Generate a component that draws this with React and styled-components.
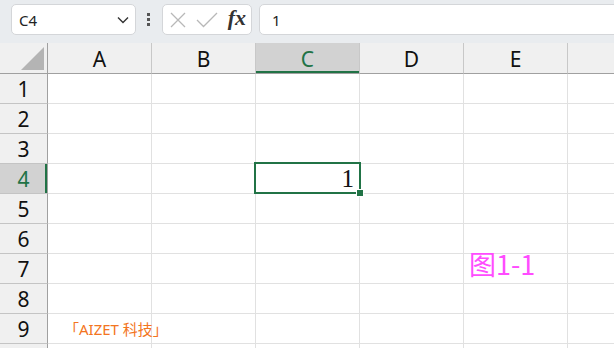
import React from 'react';
import styled, { createGlobalStyle, css } from 'styled-components';

const GREEN = '#217346';
const COLS = ['A', 'B', 'C', 'D', 'E', ''];
const ROWS = [1, 2, 3, 4, 5, 6, 7, 8, 9, ''];

const GlobalStyle = createGlobalStyle`
  html, body {
    margin: 0;
    padding: 0;
    background: #ffffff;
  }
  body {
    font-family: 'Noto Sans', 'Noto Sans CJK SC', sans-serif;
  }
`;

// 전체 화면
const Page = styled.div`
  width: 614px;
  height: 348px;
  overflow: hidden;
  display: flex;
  flex-direction: column;
  background: #ffffff;
`;

// 상단 수식 입력줄
const Toolbar = styled.div`
  height: 43px;
  flex-shrink: 0;
  display: flex;
  align-items: flex-start;
  padding: 4px 0 0 11px;
  box-sizing: border-box;
  background: #e9ecef;
  overflow: hidden;
`;

const Field = styled.div`
  height: 31px;
  box-sizing: border-box;
  border: 1px solid #d4d6d9;
  border-radius: 5px;
  background: #ffffff;
  display: flex;
  align-items: center;
  flex-shrink: 0;
`;

const NameBox = styled(Field)`
  width: 125px;
  padding: 0 6px 0 7px;
  justify-content: space-between;
  font-size: 15px;
  color: #222;
`;

const Dots = styled.div`
  display: flex;
  flex-direction: column;
  gap: 2px;
  margin: 9px 0 0 11px;
  & > span {
    width: 3px;
    height: 3px;
    background: #555;
  }
`;

const IconBox = styled(Field)`
  width: 90px;
  margin-left: 12px;
  padding: 0 5px 0 7px;
  justify-content: space-between;
`;

const Fx = styled.span`
  font-family: 'Liberation Serif', serif;
  font-style: italic;
  font-weight: 600;
  font-size: 22px;
  color: #333;
  margin-top: -3px;
`;

const FormulaBox = styled(Field)`
  width: 420px;
  margin-left: 7px;
  padding-left: 12px;
  font-size: 15px;
  color: #222;
`;

// 시트 격자
const Sheet = styled.div`
  display: grid;
  grid-template-columns: 48px repeat(6, 104px);
  grid-template-rows: 31px repeat(10, 30px);
`;

const headerBase = css`
  box-sizing: border-box;
  background: ${(p) => (p.$active ? '#d2d2d2' : '#f0f0f0')};
  color: ${(p) => (p.$active ? GREEN : '#111')};
  font-size: 21px;
  display: flex;
  align-items: center;
  justify-content: center;
`;

const Corner = styled.div`
  box-sizing: border-box;
  background: #f0f0f0;
  border-right: 1px solid #a0a0a0;
  border-bottom: 1px solid #a0a0a0;
  padding: 4px 3px 3px 21px;
`;

const ColHeader = styled.div`
  ${headerBase}
  border-right: 1px solid #c8c8c8;
  border-bottom: 1px solid #a0a0a0;
  box-shadow: ${(p) => (p.$active ? `inset 0 -2px 0 ${GREEN}` : 'none')};
  padding-top: 1px;
`;

const RowHeader = styled.div`
  ${headerBase}
  border-right: 1px solid #a0a0a0;
  border-bottom: 1px solid #c4c4c4;
  box-shadow: ${(p) => (p.$active ? `inset -2px 0 0 ${GREEN}` : 'none')};
`;

const Cell = styled.div`
  box-sizing: border-box;
  position: relative;
  border-right: 1px solid #e1e1e1;
  border-bottom: 1px solid #e1e1e1;
  display: flex;
  align-items: center;
  justify-content: ${(p) => p.$align || 'flex-start'};
`;

const Selection = styled.div`
  position: absolute;
  top: -2px;
  left: -2px;
  right: -2px;
  bottom: -1px;
  border: 2px solid ${GREEN};
  pointer-events: none;
  z-index: 2;
`;

const FillHandle = styled.div`
  position: absolute;
  right: -5px;
  bottom: -5px;
  width: 6px;
  height: 6px;
  background: ${GREEN};
  border: 1px solid #ffffff;
`;

const NumberValue = styled.span`
  font-family: 'Liberation Serif', serif;
  font-size: 25px;
  color: #111;
  padding-right: 5px;
`;

const Watermark = styled.span`
  font-family: 'Noto Sans', 'Noto Sans CJK SC', sans-serif;
  font-size: 15px;
  color: #f37521;
  padding-left: 16px;
  white-space: nowrap;
`;

const FigureLabel = styled.span`
  font-family: 'Noto Sans CJK SC', sans-serif;
  font-size: 27px;
  color: #ff4cff;
  padding: 0 0 11px 5px;
  white-space: nowrap;
`;

const Chevron = () => (
  <svg width="12" height="8" viewBox="0 0 12 8">
    <path d="M1 1.5 L6 6.5 L11 1.5" fill="none" stroke="#333" strokeWidth="1.4" />
  </svg>
);

const Cross = () => (
  <svg width="16" height="16" viewBox="0 0 16 16">
    <path d="M1 1 L15 15 M15 1 L1 15" stroke="#b8b8b8" strokeWidth="1.3" />
  </svg>
);

const Check = () => (
  <svg width="22" height="16" viewBox="0 0 22 16">
    <path d="M1 8 L7.5 14.5 L21 1" fill="none" stroke="#b8b8b8" strokeWidth="1.3" />
  </svg>
);

const Triangle = () => (
  <svg width="23" height="23" viewBox="0 0 23 23" style={{ display: 'block' }}>
    <polygon points="0,23 23,23 23,0" fill="#b4b4b4" />
  </svg>
);

const cellContent = (col, row) => {
  if (col === 'C' && row === 4) {
    return (
      <>
        <NumberValue>1</NumberValue>
        <Selection>
          <FillHandle />
        </Selection>
      </>
    );
  }
  if (col === 'A' && row === 9) return <Watermark>「AIZET 科技」</Watermark>;
  if (col === 'E' && row === 7) return <FigureLabel>图1-1</FigureLabel>;
  return null;
};

export default function App() {
  return (
    <Page>
      <GlobalStyle />
      <Toolbar>
        <NameBox>
          <span>C4</span>
          <Chevron />
        </NameBox>
        <Dots>
          <span />
          <span />
          <span />
        </Dots>
        <IconBox>
          <Cross />
          <Check />
          <Fx>fx</Fx>
        </IconBox>
        <FormulaBox>1</FormulaBox>
      </Toolbar>
      <Sheet>
        <Corner>
          <Triangle />
        </Corner>
        {COLS.map((c, i) => (
          <ColHeader key={i} $active={c === 'C'}>
            {c}
          </ColHeader>
        ))}
        {ROWS.map((r, ri) => (
          <React.Fragment key={ri}>
            <RowHeader $active={r === 4}>{r}</RowHeader>
            {COLS.map((c, i) => (
              <Cell key={i} $align={c === 'C' && r === 4 ? 'flex-end' : 'flex-start'}>
                {cellContent(c, r)}
              </Cell>
            ))}
          </React.Fragment>
        ))}
      </Sheet>
    </Page>
  );
}
